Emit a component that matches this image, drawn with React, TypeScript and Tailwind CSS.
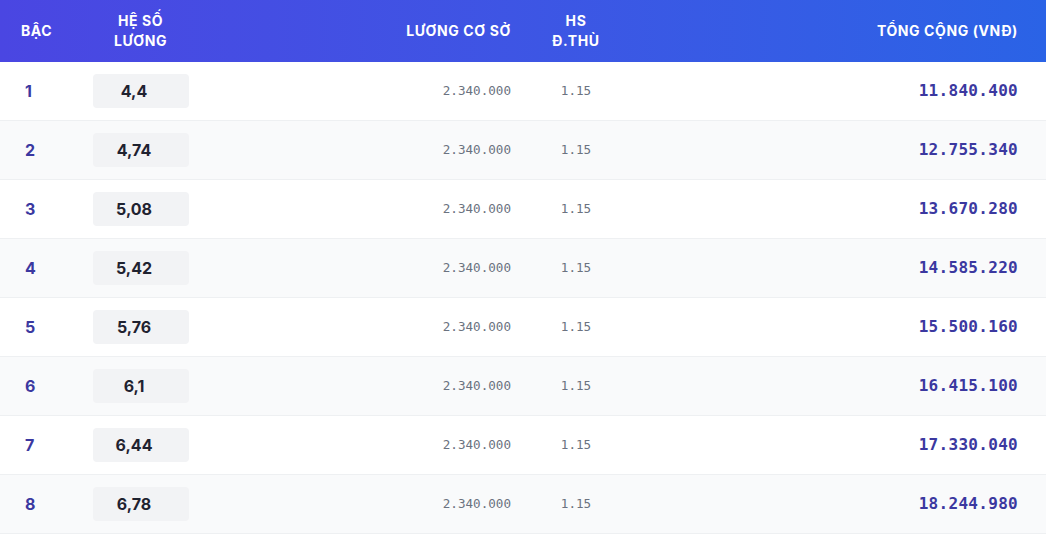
const rows = [
  { bac: 1, heSo: "4,4", total: "11.840.400" },
  { bac: 2, heSo: "4,74", total: "12.755.340" },
  { bac: 3, heSo: "5,08", total: "13.670.280" },
  { bac: 4, heSo: "5,42", total: "14.585.220" },
  { bac: 5, heSo: "5,76", total: "15.500.160" },
  { bac: 6, heSo: "6,1", total: "16.415.100" },
  { bac: 7, heSo: "6,44", total: "17.330.040" },
  { bac: 8, heSo: "6,78", total: "18.244.980" },
];

const grid = "grid grid-cols-[70px_141px_320px_90px_1fr] items-center";

const App = () => {
  return (
    <div className="w-[1046px] bg-white font-['Inter','Noto_Sans',sans-serif]">
      <div
        className={`${grid} h-[62px] bg-gradient-to-r from-[#4a46e2] to-[#2a63e6] text-white text-[14px] font-bold leading-[20px] tracking-[0.6px]`}
      >
        <div className="pl-[21px]">BẬC</div>
        <div className="text-center">
          HỆ SỐ
          <br />
          LƯƠNG
        </div>
        <div className="text-right pr-[20px]">LƯƠNG CƠ SỞ</div>
        <div className="text-center">
          HS
          <br />
          Đ.THÙ
        </div>
        <div className="text-right pr-[28px]">TỔNG CỘNG (VNĐ)</div>
      </div>

      {rows.map((row, i) => (
        <div
          key={row.bac}
          className={`${grid} h-[59px] border-b border-[#eef0f2] ${
            i % 2 === 1 ? "bg-[#f9fafb]" : "bg-white"
          }`}
        >
          <div className="pl-[25px] text-[16px] font-bold text-[#3b38a0]">
            {row.bac}
          </div>
          <div className="flex justify-center">
            <div className="w-[96px] h-[34px] rounded-[4px] bg-[#f2f3f5] flex items-center justify-center pr-[13px] text-[16px] font-bold text-[#1f2230]">
              {row.heSo}
            </div>
          </div>
          <div className="text-right pr-[20px] font-['DejaVu_Sans_Mono',monospace] text-[12.6px] text-[#6b7280]">
            2.340.000
          </div>
          <div className="text-center font-['DejaVu_Sans_Mono',monospace] text-[12.6px] text-[#6b7280]">
            1.15
          </div>
          <div className="text-right pr-[28px] font-['DejaVu_Sans_Mono',monospace] text-[16px] font-bold tracking-[0.3px] text-[#3b38a0]">
            {row.total}
          </div>
        </div>
      ))}
    </div>
  );
};

export default App;
